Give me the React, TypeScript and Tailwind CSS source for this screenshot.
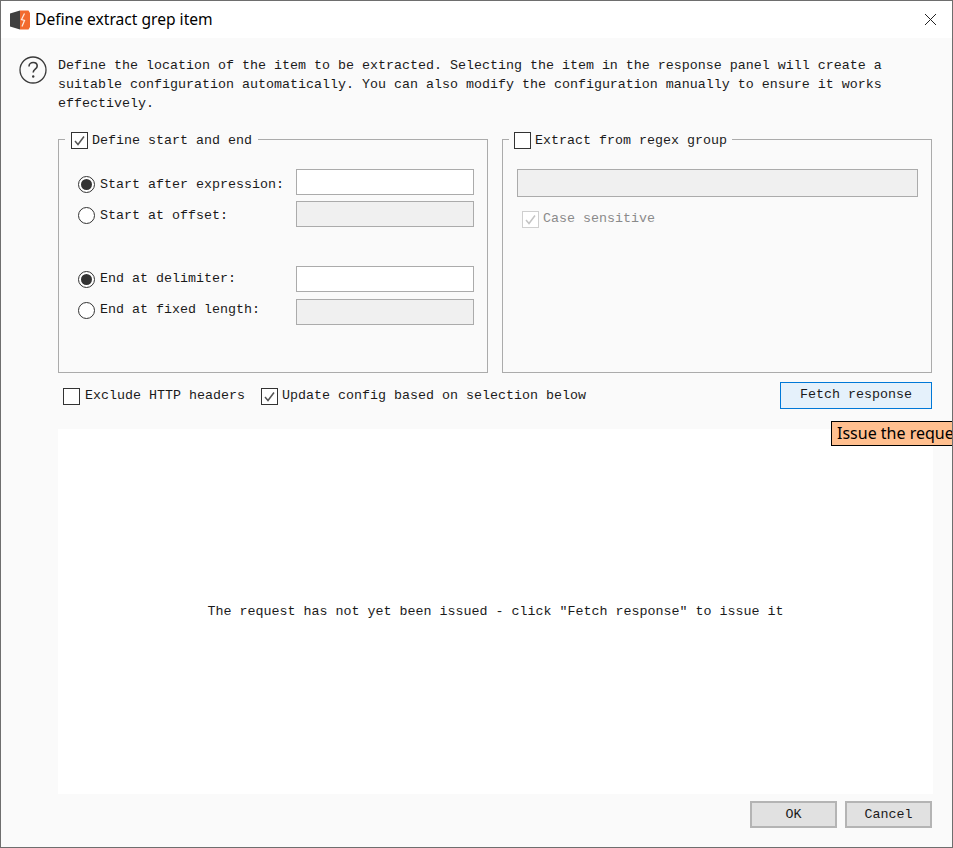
import React from 'react';

const mono = "font-['Liberation_Mono',monospace] text-[13.33px] leading-[18px] text-[#1a1a1a]";

function Check({ checked, disabled, size = 'w-[17px] h-[17px]' }: { checked?: boolean; disabled?: boolean; size?: string }) {
  return (
    <span
      className={`${size} shrink-0 flex items-center justify-center border bg-white ${
        disabled ? 'border-[#cfcfcf]' : 'border-[#333333]'
      }`}
    >
      {checked && (
        <svg width="13" height="13" viewBox="0 0 13 13" fill="none">
          <path
            d="M2 7l3 3.5L11 2.5"
            stroke={disabled ? '#c4c4c4' : '#555555'}
            strokeWidth="1.5"
          />
        </svg>
      )}
    </span>
  );
}

function Radio({ checked }: { checked?: boolean }) {
  return (
    <span className="w-[17px] h-[17px] shrink-0 rounded-full border border-[#333333] bg-white flex items-center justify-center">
      {checked && <span className="w-[11px] h-[11px] rounded-full bg-[#333333]" />}
    </span>
  );
}

function RadioRow({
  label,
  checked,
  disabled,
  shift,
}: {
  label: string;
  checked?: boolean;
  disabled?: boolean;
  shift: string;
}) {
  return (
    <div className="flex items-center h-[26px] pl-[19px]">
      {/* the radio and its label don't sit centred on the input in the original */}
      <div className={`flex items-center w-[218px] ${shift}`}>
        <Radio checked={checked} />
        <span className={`${mono} ml-[5px]`}>{label}</span>
      </div>
      <div
        className={`w-[178px] h-[26px] border border-[#ababab] ${disabled ? 'bg-[#f0f0f0]' : 'bg-white'}`}
      />
    </div>
  );
}

function Logo() {
  return (
    <svg width="20" height="20" viewBox="0 0 20 20" className="shrink-0">
      <path d="M0 3.5L10 0.5V19.5L0 16.5Z" fill="#404040" />
      <path d="M10 0.5H18.5L20 3V17L18.5 19.5H10Z" fill="#f26a2e" />
      <path d="M14.5 3.5L11.5 9.5L14.5 10.5L12 16.5" fill="none" stroke="#ffe9dc" strokeWidth="1.3" />
    </svg>
  );
}

export default function App() {
  return (
    <div className="w-[953px] h-[848px] box-border border border-[#6e6e6e] bg-[#fafafa] relative overflow-hidden flex flex-col">
      {/* title bar */}
      <div className="h-[37px] shrink-0 bg-white flex items-center pl-[9px] pr-[15px]">
        <Logo />
        <span className="ml-[5px] font-['Noto_Sans',sans-serif] text-[15.6px] text-black">Define extract grep item</span>
        <svg width="13" height="13" viewBox="0 0 13 13" className="ml-auto" fill="none">
          <path d="M1 1l11 11M12 1L1 12" stroke="#222222" strokeWidth="1" />
        </svg>
      </div>

      {/* description */}
      <div className="flex pl-[18px] pt-[18px] h-[92px] shrink-0">
        <svg width="28" height="28" viewBox="0 0 28 28" className="shrink-0" fill="none">
          <circle cx="14" cy="14" r="13" stroke="#3a3a3a" strokeWidth="1.3" />
          <path d="M10 10.5c0-2.5 2-4 4.2-4 2.3 0 4 1.5 4 3.5 0 3.2-4 3.2-4 6.5" stroke="#3a3a3a" strokeWidth="1.6" />
          <circle cx="14.2" cy="20.5" r="1.2" fill="#3a3a3a" />
        </svg>
        <p className={`${mono} ml-[11px] !leading-[19px] w-[840px]`}>
          Define the location of the item to be extracted. Selecting the item in the response panel will create a
          suitable configuration automatically. You can also modify the configuration manually to ensure it works
          effectively.
        </p>
      </div>

      {/* config groups */}
      <div className="ml-[57px] w-[874px] flex gap-[14px] shrink-0">
        <fieldset className="w-[430px] h-[243px] box-border border border-[#ababab]">
          <legend className="ml-[6px] px-[6px] h-[18px] flex items-center">
            <span className="mt-[3px] flex items-center">
              <Check checked />
              <span className={`${mono} ml-[4px]`}>Define start and end</span>
            </span>
          </legend>
          <div className="pt-[21px] flex flex-col gap-[6px]">
            <RadioRow label="Start after expression:" checked shift="mt-[5px]" />
            <RadioRow label="Start at offset:" disabled shift="mt-[3px]" />
          </div>
          <div className="pt-[39px] flex flex-col gap-[7px]">
            <RadioRow label="End at delimiter:" checked shift="mt-0" />
            <RadioRow label="End at fixed length:" disabled shift="-mt-[4px]" />
          </div>
        </fieldset>

        <fieldset className="w-[430px] h-[243px] box-border border border-[#ababab]">
          <legend className="ml-[6px] px-[5px] h-[18px] flex items-center">
            <span className="mt-[3px] flex items-center">
              <Check />
              <span className={`${mono} ml-[4px]`}>Extract from regex group</span>
            </span>
          </legend>
          <div className="pt-[21px] pl-[14px] pr-[13px]">
            <div className="h-[28px] border border-[#ababab] bg-[#f0f0f0]" />
            <div className="flex items-center mt-[13px] ml-[5px]">
              <Check checked disabled />
              <span className={`${mono} ml-[4px] !text-[#8a8a8a]`}>Case sensitive</span>
            </div>
          </div>
        </fieldset>
      </div>

      {/* options row */}
      <div className="ml-[57px] w-[874px] h-[28px] mt-[9px] shrink-0 flex items-center">
        <span className="ml-[5px]">
          <Check />
        </span>
        <span className={`${mono} ml-[5px]`}>Exclude HTTP headers</span>
        <span className="ml-[16px]">
          <Check checked />
        </span>
        <span className={`${mono} ml-[4px]`}>Update config based on selection below</span>
        <button className={`${mono} ml-auto mb-[2px] w-[152px] h-[27px] border border-[#0078d7] bg-[#e5f1fb]`}>
          Fetch response
        </button>
      </div>

      {/* response panel */}
      <div className="ml-[57px] w-[875px] h-[365px] mt-[19px] shrink-0 bg-white flex items-center justify-center">
        <span className={mono}>The request has not yet been issued - click "Fetch response" to issue it</span>
      </div>

      {/* footer */}
      <div className="flex justify-end gap-[8px] w-[931px] mt-[7px]">
        <button className={`${mono} w-[87px] h-[27px] border-2 border-[#b4b4b4] bg-[#e1e1e1]`}>OK</button>
        <button className={`${mono} w-[87px] h-[27px] border-2 border-[#b4b4b4] bg-[#e1e1e1]`}>Cancel</button>
      </div>

      {/* tooltip */}
      <div className="absolute left-[830px] top-[420px] w-[140px] h-[25px] border border-black bg-[#ffbf8f] pl-[5px] font-['Noto_Sans',sans-serif] text-[16px] leading-[23px] text-black whitespace-nowrap">
        Issue the request
      </div>
    </div>
  );
}
